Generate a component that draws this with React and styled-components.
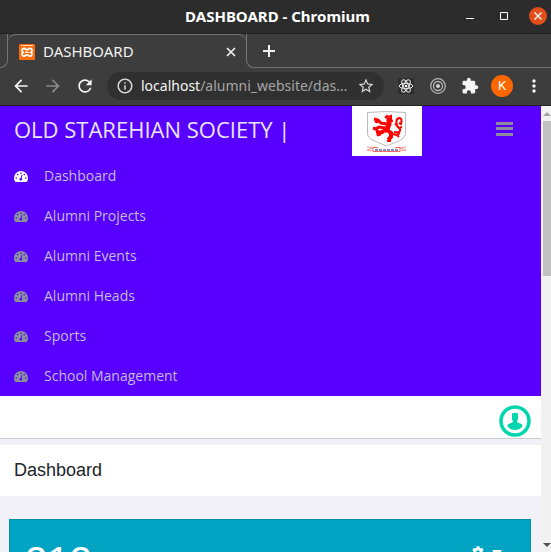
import React from 'react';
import styled, { createGlobalStyle } from 'styled-components';
import { FaCog, FaCaretDown } from 'react-icons/fa';
import { MdArrowBack, MdArrowForward, MdRefresh, MdInfoOutline, MdStarBorder, MdExtension, MdMoreVert } from 'react-icons/md';

const chromeFont = '"Noto Sans", "Open Sans", sans-serif';

const GlobalStyle = createGlobalStyle`
  * { box-sizing: border-box; }
  body { margin: 0; overflow: hidden; }
  button { appearance: none; border: 0; padding: 0; background: none; color: inherit; font: inherit; cursor: pointer; }
  svg { display: block; }
`;

const Window = styled.div`
  height: 100vh;
  display: flex;
  flex-direction: column;
  background: #3d3d3d;
  overflow: hidden;
`;

const TitleBar = styled.header`
  flex: none;
  height: 34px;
  display: grid;
  grid-template-columns: 1fr auto 1fr;
  align-items: center;
  padding: 0 4px 2px 8px;
  background: #2c2c2c;
  border-bottom: 1px solid #242424;
  color: #fff;
  font: 700 15px/20px ${chromeFont};
`;

const WindowControls = styled.div`
  grid-column: 3;
  display: flex;
  justify-content: flex-end;
  align-items: center;
  gap: 16px;
`;

const WindowTitle = styled.span`
  grid-column: 2;
`;

const WindowButton = styled.button`
  width: 18px;
  height: 18px;
  display: grid;
  place-items: center;
  border-radius: 50%;
  background: ${(p) => (p.$close ? '#e24e1b' : 'transparent')};
`;

const TabStrip = styled.div`
  flex: none;
  height: 34px;
  display: flex;
  color: #f1f1f1;
`;

const TabLead = styled.div`
  width: 8px;
  border-bottom: 1px solid #757575;
  border-bottom-right-radius: 8px;
  border-right: 1px solid #757575;
`;

const Tab = styled.div`
  width: 238px;
  display: flex;
  align-items: center;
  padding: 0 8px 0 11px;
  gap: 8px;
  border-top: 1px solid #757575;
  border-radius: 8px 8px 0 0;
  font: 400 15px/20px ${chromeFont};
`;

const TabTitle = styled.span`
  flex: 1;
  padding-bottom: 2px;
`;

const TabButton = styled.button`
  width: ${(p) => (p.$large ? '20px' : '14px')};
  height: 20px;
  display: grid;
  place-items: center;
`;

const TabTrail = styled.div`
  flex: 1;
  display: flex;
  align-items: center;
  padding-left: 12px;
  border-left: 1px solid #757575;
  border-bottom: 1px solid #757575;
  border-bottom-left-radius: 8px;
`;

const Toolbar = styled.div`
  flex: none;
  height: 38px;
  display: flex;
  align-items: center;
  padding: 0 7px 1px 11px;
  border-bottom: 1px solid #232323;
  color: #f4f4f4;
`;

const NavButtons = styled.div`
  display: flex;
  gap: 12px;
`;

const IconButton = styled.button`
  flex: none;
  width: 20px;
  height: 20px;
  display: grid;
  place-items: center;
  color: ${(p) => (p.$dim ? '#898989' : 'inherit')};
`;

const AddressBar = styled.div`
  flex: 1;
  min-width: 0;
  height: 28px;
  margin: 0 12px;
  padding: 0 8px 0 9px;
  display: flex;
  align-items: center;
  gap: 7px;
  border-radius: 14px;
  background: #303030;
  color: #d8d8d8;
  font: 400 14px/20px ${chromeFont};
`;

const Address = styled.span`
  flex: 1;
  min-width: 0;
  white-space: nowrap;
  color: #a5a5a5;
`;

const Host = styled.span`
  color: #f4f4f4;
`;

const Extensions = styled.div`
  display: flex;
  align-items: center;
  gap: 12px;
`;

const Avatar = styled.button`
  width: 22px;
  height: 22px;
  margin: 0 -1px;
  border-radius: 50%;
  background: #ff6600;
  color: #fff;
  font: 400 13px/22px Roboto, sans-serif;
`;

const Viewport = styled.div`
  flex: 1;
  min-height: 0;
  display: flex;
  overflow: hidden;
`;

const Page = styled.div`
  flex: 1;
  min-width: 0;
  overflow: hidden;
  background: #f1f1f7;
`;

const ScrollTrack = styled.div`
  flex: none;
  width: 10px;
  display: flex;
  flex-direction: column;
  align-items: flex-end;
  background: #f1f1f1;
`;

const ScrollButton = styled.button`
  width: 8px;
  height: 15px;
  display: flex;
  align-items: center;
  overflow: hidden;
  color: ${(p) => (p.$disabled ? '#a3a3a3' : '#505050')};
  margin-top: ${(p) => (p.$end ? 'auto' : '0')};
`;

const ScrollThumb = styled.div`
  width: 8px;
  height: 155px;
  background: #c1c1c1;
`;

const SiteHeader = styled.nav`
  background: #5800ff;
`;

const BrandRow = styled.div`
  height: 50px;
  display: flex;
  align-items: center;
  padding: 0 27px 0 14px;
`;

const Brand = styled.a`
  flex: 1;
  padding-bottom: 4px;
  color: #e9e6fa;
  font: 400 22px/30px "Open Sans", sans-serif;
  text-decoration: none;
  white-space: nowrap;
`;

const Crest = styled.div`
  width: 70px;
  height: 50px;
  margin-right: 73px;
  background: #fff;
`;

const MenuToggle = styled.button`
  width: 19px;
  height: 40px;
  display: grid;
  place-items: center;
  padding-bottom: 4px;
  color: #8b8b9c;
`;

const Menu = styled.ul`
  margin: 0;
  padding: 0;
  list-style: none;
`;

const MenuLink = styled.a`
  height: 40px;
  display: flex;
  align-items: center;
  gap: 16px;
  padding-left: 14px;
  color: #c0bcdc;
  font: 400 14px/20px "Open Sans", sans-serif;
  text-decoration: none;

  svg { color: ${(p) => (p.$active ? '#fff' : '#8b939b')}; }
`;

const UserBar = styled.div`
  height: 43px;
  display: flex;
  justify-content: flex-end;
  align-items: flex-end;
  padding: 0 10px 1px;
  background: #fff;
  border-bottom: 1px solid #c9c9d0;
`;

const UserButton = styled.button`
  width: 32px;
  height: 32px;
`;

const Heading = styled.h1`
  margin: 6px 0 23px;
  padding: 13px 14px;
  background: #fff;
  color: #212529;
  font: 400 18px/25px "Liberation Sans", Arial, sans-serif;
`;

const StatCard = styled.section`
  height: 160px;
  display: flex;
  justify-content: space-between;
  align-items: flex-start;
  margin: 0 10px 0 9px;
  padding: 17px 25px 16px 15px;
  background: #00a3c1;
  border: 1px solid #0090aa;
  color: #fff;
`;

const StatValue = styled.strong`
  font: 400 40px/48px "Liberation Sans", Arial, sans-serif;
`;

const SettingsButton = styled.button`
  display: flex;
  align-items: center;
  gap: 5px;
  padding-top: 7px;
`;

const menuItems = ['Dashboard', 'Alumni Projects', 'Alumni Events', 'Alumni Heads', 'Sports', 'School Management'];

function GaugeIcon() {
  return (
    <svg width="14" height="14" viewBox="0 0 14 14" aria-hidden="true">
      <path d="M0 9a7 7 0 0 1 14 0q0 2-1 3.600-.2.400-.8.400H1.800q-.6 0-.8-.4Q0 11 0 9z" fill="currentColor" />
      <g fill="#5800ff">
        <circle cx="2.300" cy="9" r=".8" />
        <circle cx="3.700" cy="5.600" r=".8" />
        <circle cx="7" cy="4.200" r=".8" />
        <circle cx="10.300" cy="5.600" r=".8" />
        <circle cx="11.700" cy="9" r=".8" />
        <circle cx="6.800" cy="10.300" r="1.300" />
      </g>
      <path d="M6.800 10.300l1.100-4" stroke="#5800ff" strokeLinecap="round" />
    </svg>
  );
}

function Favicon() {
  return (
    <svg width="16" height="16" viewBox="0 0 16 16" aria-hidden="true">
      <rect width="16" height="16" rx="1" fill="#fb6d0c" />
      <path d="M2 1.500h12" stroke="#ffd3b0" />
      <path d="M5.200 4.500C2.500 4.500 2.500 7.200 4 8.200c-1.700 1.200-1.200 4 1.200 4 1.600 0 1.400-1.400 2.800-1.400s1.200 1.400 2.800 1.400c2.400 0 2.900-2.800 1.200-4 1.500-1 1.500-3.700-1.200-3.700-1.600 0-1.400 1.400-2.800 1.400S6.800 4.500 5.200 4.500z" fill="none" stroke="#fff" strokeWidth="1.800" />
      <path d="M6 8.300h4" stroke="#fff" strokeWidth="1.200" />
    </svg>
  );
}

function ReactIcon() {
  return (
    <svg width="16" height="16" viewBox="0 0 16 16" aria-hidden="true">
      <rect width="16" height="16" fill="#2e2e2e" />
      <g fill="none" stroke="#e8e8e8">
        <ellipse cx="8" cy="8" rx="6.800" ry="2.700" />
        <ellipse cx="8" cy="8" rx="6.800" ry="2.700" transform="rotate(60 8 8)" />
        <ellipse cx="8" cy="8" rx="6.800" ry="2.700" transform="rotate(120 8 8)" />
      </g>
      <circle cx="8" cy="8" r="1.300" fill="#fff" />
    </svg>
  );
}

function TargetIcon() {
  return (
    <svg width="16" height="16" viewBox="0 0 16 16" fill="none" stroke="#b5b5b5" aria-hidden="true">
      <circle cx="8" cy="8" r="7.300" strokeWidth="1.300" />
      <circle cx="8" cy="8" r="4.500" strokeWidth="1.300" />
      <circle cx="8" cy="8" r="2" fill="#d0d0d0" stroke="none" />
    </svg>
  );
}

function CrestArt() {
  return (
    <svg width="70" height="50" viewBox="0 0 70 50" role="img" aria-label="Starehe crest">
      <path d="M15.500 6.500q19-2 38 0v21c0 6-9 8-19 12.500-10-4.500-19-6.500-19-12.500z" fill="#fff" stroke="#b8bbbe" />
      <g fill="none" stroke="#f00">
        <path d="M37 12v6l-2 5-3 2" strokeWidth="5" />
        <path d="M33 12l2-2 1 1 3-1v3l1 2-3 1" strokeWidth="2" />
        <path d="M35 18l-6-1-3-3-4-1M23 15l3 1M33 22l-6-1-3 2-3-1M26 21l-2 3" strokeWidth="3" />
        <path d="M32 25l-4 2-2-1 1 4M35 24l4 3v4l-3 3" strokeWidth="4" />
        <path d="M35 35h4M40 28l5 1 2 2M45 29l3-2M42 26c5 1 8-1 5-4-3-2-4-9 0-10 3 0 3 3 2 6l-2-1M45 17l-2 2M47 22l3-1" strokeWidth="2" />
      </g>
      <path d="M15 41l6 1-6 2 5 1M54 41l-6 1 6 2-5 1" fill="none" stroke="#f79a9a" />
      <path d="M21 41.500h27v4H21z" fill="#fff" stroke="#f46a6a" />
      <path d="M26 41.500h17" stroke="#fff" strokeWidth="2" />
      <path d="M23 44h24" stroke="#8b8cc0" strokeWidth="2" strokeDasharray="3 1" />
    </svg>
  );
}

export default function App() {
  return (
    <Window>
      <GlobalStyle />
      <TitleBar>
        <WindowTitle>DASHBOARD - Chromium</WindowTitle>
        <WindowControls>
          <WindowButton aria-label="Minimize">
            <svg width="8" height="8"><path d="M0 6.500h8" stroke="#fff" /></svg>
          </WindowButton>
          <WindowButton aria-label="Maximize">
            <svg width="8" height="8"><path d="M.5.5h7v7h-7z" fill="none" stroke="#fff" /></svg>
          </WindowButton>
          <WindowButton $close aria-label="Close window">
            <svg width="8" height="8"><path d="M0.500.5l7 7m0-7l-7 7" stroke="#fff" strokeWidth="1.300" /></svg>
          </WindowButton>
        </WindowControls>
      </TitleBar>
      <TabStrip>
        <TabLead />
        <Tab>
          <Favicon />
          <TabTitle>DASHBOARD</TabTitle>
          <TabButton aria-label="Close tab">
            <svg width="10" height="10"><path d="M1 1l8 8m0-8l-8 8" stroke="currentColor" strokeWidth="1.700" /></svg>
          </TabButton>
        </Tab>
        <TabTrail>
          <TabButton $large aria-label="New tab">
            <svg width="12" height="12"><path d="M6 0v12M0 6h12" stroke="currentColor" strokeWidth="2" /></svg>
          </TabButton>
        </TabTrail>
      </TabStrip>
      <Toolbar>
        <NavButtons>
          <IconButton aria-label="Back"><MdArrowBack size={20} /></IconButton>
          <IconButton $dim aria-label="Forward"><MdArrowForward size={20} /></IconButton>
          <IconButton aria-label="Reload"><MdRefresh size={20} /></IconButton>
        </NavButtons>
        <AddressBar>
          <MdInfoOutline size={18} />
          <Address><Host>localhost</Host>/alumni_website/das…</Address>
          <IconButton aria-label="Bookmark"><MdStarBorder size={18} /></IconButton>
        </AddressBar>
        <Extensions>
          <IconButton aria-label="React developer tools"><ReactIcon /></IconButton>
          <IconButton aria-label="Recorder"><TargetIcon /></IconButton>
          <IconButton aria-label="Extensions"><MdExtension size={18} /></IconButton>
          <Avatar aria-label="Profile K">K</Avatar>
          <IconButton aria-label="Browser menu"><MdMoreVert size={20} /></IconButton>
        </Extensions>
      </Toolbar>
      <Viewport>
        <Page>
          <SiteHeader>
            <BrandRow>
              <Brand href="#">OLD STAREHIAN SOCIETY |</Brand>
              <Crest><CrestArt /></Crest>
              <MenuToggle aria-label="Toggle menu">
                <svg width="17" height="14"><path d="M0 1.500h17M0 6.500h17M0 12.500h17" stroke="currentColor" strokeWidth="3" /></svg>
              </MenuToggle>
            </BrandRow>
            <Menu>
              {menuItems.map((item, i) => (
                <li key={item}>
                  <MenuLink href="#" $active={i === 0}>
                    <GaugeIcon />
                    {item}
                  </MenuLink>
                </li>
              ))}
            </Menu>
          </SiteHeader>
          <UserBar>
            <UserButton aria-label="Account">
              <svg width="32" height="32" viewBox="0 0 32 32">
                <circle cx="16" cy="16" r="14" fill="#fff" stroke="#00d6ae" strokeWidth="3.500" />
                <path d="M13 8.500q3-1.500 6 0v6q-1 1-1 2.500c1.200 1.500 5.500 1 5.500 4-1.500 2.500-4.500 4-7.500 4s-6-1.500-7.500-4c0-3 4.300-2.500 5.500-4q0-1.500-1-2.500z" fill="#00d6ae" />
              </svg>
            </UserButton>
          </UserBar>
          <Heading>Dashboard</Heading>
          <StatCard>
            <StatValue>212</StatValue>
            <SettingsButton aria-label="Card settings"><FaCog size={12} /><FaCaretDown size={16} /></SettingsButton>
          </StatCard>
        </Page>
        <ScrollTrack>
          <ScrollButton $disabled aria-label="Scroll up">
            <svg width="8" height="4"><path d="M0 4l4-4 4 4z" fill="currentColor" /></svg>
          </ScrollButton>
          <ScrollThumb />
          <ScrollButton $end aria-label="Scroll down">
            <svg width="8" height="4"><path d="M0 0h8L4 4z" fill="currentColor" /></svg>
          </ScrollButton>
        </ScrollTrack>
      </Viewport>
    </Window>
  );
}
